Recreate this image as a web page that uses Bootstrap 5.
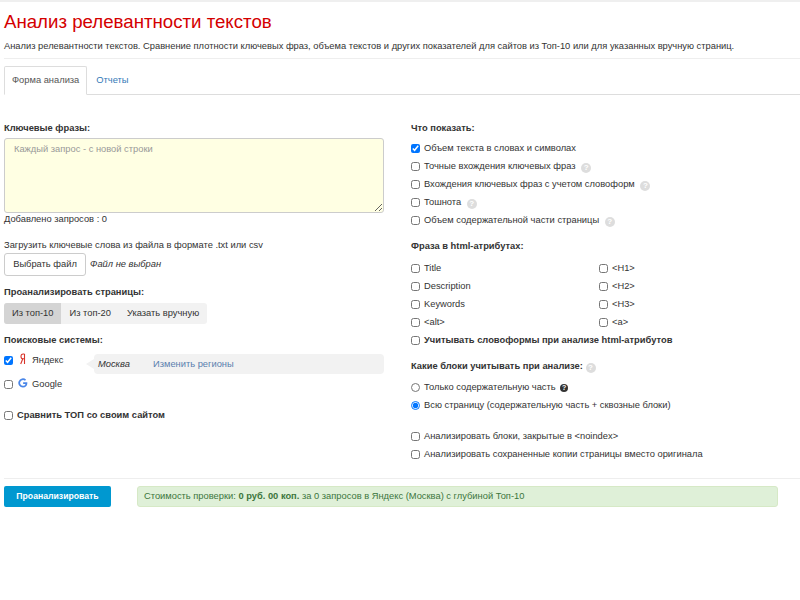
<!DOCTYPE html>
<html lang="ru"><head><meta charset="utf-8"><title>Анализ</title>
<link rel="stylesheet" href="https://cdn.jsdelivr.net/npm/bootstrap@5.3.0/dist/css/bootstrap.min.css">
<style>
body{font-family:"Liberation Sans",Arial,sans-serif;font-size:9.33px;line-height:13px;color:#333;background:#fff}
.topline{height:2px;background:#efefef}
.page-title{font-size:18.67px;line-height:24px;color:#d40000;font-weight:400;margin:8px 4px 0}
.page-sub{margin:5px 4px 0;line-height:14px}
.sep{border-top:1px solid #eee;margin:5px 0 7px 4px}
.tabs-bar{border-bottom:1px solid #ddd;margin-left:4px;height:29px}
.tab-item{height:29px;padding:0 7px;display:flex;align-items:center;color:#555;border:1px solid #ddd;border-bottom:1px solid #fff;border-radius:2px 2px 0 0;background:#fff}
.tab-link{color:#337ab7;padding:0 9px;display:flex;align-items:center;text-decoration:none}
.form-area{display:flex;margin-top:26px}
.left-col{width:380px;margin-left:4px}
.right-col{margin-left:27px;width:380px}
.lbl{font-weight:700;margin:0;line-height:14px}
.kw{display:block;width:380px;height:75px;background:#ffffe3;border:1px solid #ccc;border-radius:3px;margin-top:3px;padding:3px 9px;font-size:9.33px;line-height:14px;font-family:inherit;outline:0}
.kw::placeholder{color:#999}
.added{margin-top:0}
.upl{margin-top:13px}
.file-row{display:flex;align-items:center;margin-top:1px;font-style:italic}
.file-btn{height:23px;width:82px;background:#fff;border:1px solid #ccc;border-radius:3px;font-size:9.33px;font-style:normal;color:#333;padding:0;margin-right:4px;font-family:inherit}
.lbl-pages{margin-top:9px}
.top-switch{display:inline-flex;background:#f2f2f2;border-radius:3px;height:21px;margin-top:4px;align-items:center}
.top-switch span{padding:0 8px;line-height:21px}
.top-switch .on{background:#d4d4d4;border-radius:3px 0 0 3px}
.lbl-eng{margin-top:9px}
.engines{display:flex;margin-top:6px}
.eng-names{width:90px}
.eng{display:flex;align-items:center;height:14px}
.eng-gap{margin-top:10px}
.eng input,.chk input{width:9px;height:9px;margin:0;flex:none}
.eng-ico{width:10px;height:12px;margin:-2px 4px 0 5px;flex:none;display:block}
.region{position:relative;flex:1;background:#f2f2f2;border-radius:4px;height:20px;margin-top:1px;display:flex;align-items:center;padding-left:4px}
.region::before{content:"";position:absolute;left:-8px;top:5px;border:solid transparent;border-width:5px 8px 5px 0;border-right-color:#f2f2f2}
.region i{width:55px}
.region a{color:#5a7fae;text-decoration:none}
.chk{display:flex;align-items:center;height:14px;margin-bottom:4px}
.chk label{margin-left:4px}
.chk-top{margin-top:17px}
.q{display:inline-block;width:10px;height:10px;border-radius:50%;background:#ddd;color:#fff;font-size:8px;line-height:10px;text-align:center;font-weight:700;margin-left:3px;vertical-align:-1px}
.q.dark{background:#333;margin-left:2px;width:8px;height:8px;line-height:8px;font-size:7px;vertical-align:0}
.q.flush{margin-left:0}
.attrs{display:grid;grid-template-columns:188px 1fr;margin-top:8px}
.g1{margin-top:6px}.t2{margin-top:12px}.g2{margin-top:7px}.g3{margin-top:17px}
.foot{border-top:1px solid #eee;margin:13px 0 0 4px;padding-top:7px;display:flex}
.go{width:107px;height:21px;background:#0098d0;color:#fff;font-weight:700;font-size:8.67px;border:0;border-radius:2px;padding:0;font-family:inherit}
.cost{margin-left:26px;width:641px;height:21px;background:#dff0d8;border:1px solid #d6e9c6;border-radius:3px;color:#3c763d;padding:0 6px;display:flex;align-items:center;white-space:pre}
</style></head><body>
<div class="topline"></div>
<h1 class="page-title">Анализ релевантности текстов</h1>
<p class="page-sub">Анализ релевантности текстов. Сравнение плотности ключевых фраз, объема текстов и других показателей для сайтов из Топ-10 или для указанных вручную страниц.</p>
<div class="sep"></div>
<div class="tabs-bar d-flex"><div class="tab-item">Форма анализа</div><a class="tab-link" href="#">Отчеты</a></div>
<div class="form-area">
<div class="left-col">
<p class="lbl">Ключевые фразы:</p>
<textarea class="kw" placeholder="Каждый запрос - с новой строки"></textarea>
<div class="added">Добавлено запросов : 0</div>
<div class="upl">Загрузить ключевые слова из файла в формате .txt или csv</div>
<div class="file-row"><button class="file-btn">Выбрать файл</button>Файл не выбран</div>
<p class="lbl lbl-pages">Проанализировать страницы:</p>
<div class="top-switch"><span class="on">Из топ-10</span><span>Из топ-20</span><span>Указать вручную</span></div>
<p class="lbl lbl-eng">Поисковые системы:</p>
<div class="engines">
<div class="eng-names">
<div class="eng"><input type="checkbox" checked>
<svg class="eng-ico" viewBox="0 0 10 12"><path d="M6.500 1v10M6.500 1H5.200C3.700 1 3 2.100 3 3.400 3 4.900 3.800 5.800 5.200 5.800H6.500M4.800 5.800 2.700 11" fill="none" stroke="#d8342a" stroke-width="1.100"/></svg>Яндекс</div>
<div class="eng eng-gap"><input type="checkbox">
<svg class="eng-ico" viewBox="0 0 14 14"><path d="M13 6H7.200V8.300H10.500C10 10 8.800 10.900 7 10.900A4 4 0 1 1 9.700 4L11.400 2.300A6.400 6.400 0 1 0 7 13.200C11 13.200 13.600 10.400 13 6Z" fill="#4a86e8"/></svg>Google</div>
</div>
<div class="region"><i>Москва</i><a href="#">Изменить регионы</a></div>
</div>
<div class="chk chk-top"><input type="checkbox"><label class="fw-bold">Сравнить ТОП со своим сайтом</label></div>
</div>
<div class="right-col">
<p class="lbl">Что показать:</p>
<div class="g1">
<div class="chk"><input type="checkbox" checked><label>Объем текста в словах и символах</label></div>
<div class="chk"><input type="checkbox"><label>Точные вхождения ключевых фраз <span class="q">?</span></label></div>
<div class="chk"><input type="checkbox"><label>Вхождения ключевых фраз с учетом словоформ <span class="q">?</span></label></div>
<div class="chk"><input type="checkbox"><label>Тошнота <span class="q">?</span></label></div>
<div class="chk"><input type="checkbox"><label>Объем содержательной части страницы <span class="q">?</span></label></div>
</div>
<p class="lbl t2">Фраза в html-атрибутах:</p>
<div class="attrs">
<div class="chk"><input type="checkbox"><label>Title</label></div><div class="chk"><input type="checkbox"><label>&lt;H1&gt;</label></div>
<div class="chk"><input type="checkbox"><label>Description</label></div><div class="chk"><input type="checkbox"><label>&lt;H2&gt;</label></div>
<div class="chk"><input type="checkbox"><label>Keywords</label></div><div class="chk"><input type="checkbox"><label>&lt;H3&gt;</label></div>
<div class="chk"><input type="checkbox"><label>&lt;alt&gt;</label></div><div class="chk"><input type="checkbox"><label>&lt;a&gt;</label></div>
</div>
<div class="chk"><input type="checkbox"><label class="fw-bold">Учитывать словоформы при анализе html-атрибутов</label></div>
<p class="lbl t2">Какие блоки учитывать при анализе: <span class="q flush">?</span></p>
<div class="g2">
<div class="chk"><input type="radio" name="b"><label>Только содержательную часть <span class="q dark">?</span></label></div>
<div class="chk"><input type="radio" name="b" checked><label>Всю страницу (содержательную часть + сквозные блоки)</label></div>
</div>
<div class="g3">
<div class="chk"><input type="checkbox"><label>Анализировать блоки, закрытые в &lt;noindex&gt;</label></div>
<div class="chk"><input type="checkbox"><label>Анализировать сохраненные копии страницы вместо оригинала</label></div>
</div>
</div>
</div>
<div class="foot"><button class="go">Проанализировать</button><div class="cost">Стоимость проверки: <b>0 руб. 00 коп.</b> за 0 запросов в Яндекс (Москва) с глубиной Топ-10</div></div>
</body></html>
